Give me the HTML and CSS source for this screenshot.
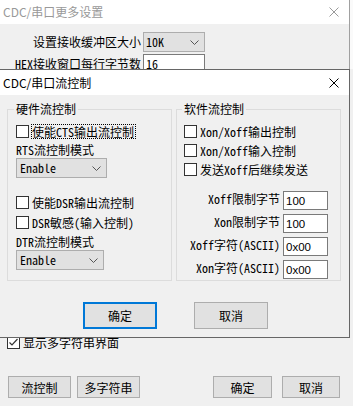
FILE: index.html
```html
<!DOCTYPE html>
<html>
<head>
<meta charset="utf-8">
<link rel="stylesheet" href="styles.css">
</head>
<body>
<div class="screen">
  <div class="bgwin">
    <div class="bg-top">
      <div class="bg-top-main">
        <div class="titlebar">
          <span class="title inactive">CDC/串口更多设置</span>
          <svg class="close" width="10" height="10" viewBox="0 0 10 10"><path d="M0.5 0.5 L9.5 9.5 M9.5 0.5 L0.5 9.5" stroke="#9a9a9a" stroke-width="1"/></svg>
        </div>
        <div class="bg-rows">
          <div class="field-row">
            <span class="lbl">设置接收缓冲区大小</span>
            <div class="combo k"><span>10K</span><svg width="9" height="5" viewBox="0 0 9 5"><polyline points="0.5,0.5 4.5,4.5 8.5,0.5" fill="none" stroke="#555" stroke-width="1"/></svg></div>
          </div>
          <div class="field-row">
            <span class="lbl">HEX接收窗口每行字节数</span>
            <div class="edit wide">16</div>
          </div>
        </div>
      </div>
      <div class="bg-top-rest"></div>
    </div>
    <div class="bg-bottom">
      <div class="chk bg-check">
        <span class="box"><svg width="11" height="11" viewBox="0 0 11 11"><polyline points="1.5,5.5 4,8 9.5,2" fill="none" stroke="#333" stroke-width="1.2"/></svg></span>
        <span>显示多字符串界面</span>
      </div>
      <div class="bg-buttons">
        <div class="btn-pair left">
          <div class="btn w63">流控制</div>
          <div class="btn w63">多字符串</div>
        </div>
        <div class="btn-pair right">
          <div class="btn w59">确定</div>
          <div class="btn w58">取消</div>
        </div>
      </div>
    </div>
  </div>

  <div class="dialog">
    <div class="titlebar dlg-title">
      <span class="title">CDC/串口流控制</span>
      <svg class="close" width="10" height="10" viewBox="0 0 10 10"><path d="M0.5 0.5 L9.5 9.5 M9.5 0.5 L0.5 9.5" stroke="#000" stroke-width="1"/></svg>
    </div>
    <div class="dlg-body">
      <div class="groups">
        <div class="group hw">
          <span class="legend">硬件流控制</span>
          <div class="chk first"><span class="box"></span><span class="focus">使能CTS输出流控制</span></div>
          <div class="cap after-chk">RTS流控制模式</div>
          <div class="combo rts after-cap"><span>Enable</span><svg width="9" height="5" viewBox="0 0 9 5"><polyline points="0.5,0.5 4.5,4.5 8.5,0.5" fill="none" stroke="#555" stroke-width="1"/></svg></div>
          <div class="chk after-combo"><span class="box"></span><span>使能DSR输出流控制</span></div>
          <div class="chk next5"><span class="box"></span><span>DSR敏感(输入控制)</span></div>
          <div class="cap next5">DTR流控制模式</div>
          <div class="combo dtr after-cap"><span>Enable</span><svg width="9" height="5" viewBox="0 0 9 5"><polyline points="0.5,0.5 4.5,4.5 8.5,0.5" fill="none" stroke="#555" stroke-width="1"/></svg></div>
        </div>
        <div class="group sw">
          <span class="legend">软件流控制</span>
          <div class="chk first"><span class="box"></span><span>Xon/Xoff输出控制</span></div>
          <div class="chk next4"><span class="box"></span><span>Xon/Xoff输入控制</span></div>
          <div class="chk next4"><span class="box"></span><span>发送Xoff后继续发送</span></div>
          <div class="frow first-f"><span class="flbl">Xoff限制字节</span><div class="edit small">100</div></div>
          <div class="frow next4"><span class="flbl">Xon限制字节</span><div class="edit small">100</div></div>
          <div class="frow next4"><span class="flbl">Xoff字符(ASCII)</span><div class="edit small">0x00</div></div>
          <div class="frow next4"><span class="flbl">Xon字符(ASCII)</span><div class="edit small">0x00</div></div>
        </div>
      </div>
      <div class="dlg-buttons">
        <div class="btn big default">确定</div>
        <div class="btn big">取消</div>
      </div>
    </div>
  </div>
</div>
</body>
</html>
```

FILE: styles.css
```css
* { box-sizing: border-box; }
html, body { margin: 0; padding: 0; }
body {
  width: 353px;
  height: 406px;
  overflow: hidden;
  background: #f0f0f0;
  font-family: "Noto Sans Mono CJK SC", "Noto Sans CJK SC", monospace;
  font-size: 12px;
  color: #000;
}
.screen {
  position: relative;
  width: 353px;
  height: 406px;
}
.bgwin {
  height: 406px;
  display: flex;
  flex-direction: column;
  background: #f0f0f0;
}
.bg-top {
  display: flex;
  height: 69px;
  background: #fff;
}
.bg-top-main {
  width: 350px;
  border-right: 1px solid #a0a0a0;
  display: flex;
  flex-direction: column;
}
.bg-top-rest { flex: 1; background: #fafafa; }

.titlebar {
  height: 24px;
  flex: none;
  background: #fff;
  display: flex;
  align-items: center;
  justify-content: space-between;
  padding: 0 10px 0 3px;
}
.title {
  font-family: "Noto Sans CJK SC", sans-serif;
  font-size: 12px;
  line-height: 16px;
}
.title.inactive { color: #999; }
.close { display: block; }

.bg-rows {
  flex: 1;
  background: #f0f0f0;
  padding-top: 8px;
  display: flex;
  flex-direction: column;
  gap: 2px;
}
.field-row {
  display: flex;
  align-items: center;
  gap: 2px;
}
.bg-rows .lbl {
  width: 141px;
  text-align: right;
  line-height: 14px;
}
.combo {
  height: 20px;
  border: 1px solid #adadad;
  background: #e1e1e1;
  display: flex;
  align-items: center;
  justify-content: space-between;
  padding: 0 5px 0 3px;
  line-height: 14px;
}
.combo svg { display: block; }
.combo.k { width: 62px; padding-left: 2px; }
.combo.rts { width: 91px; }
.combo.dtr { width: 88px; }

.edit {
  height: 20px;
  border: 1px solid #7a7a7a;
  background: #fff;
  display: flex;
  align-items: center;
  padding-left: 2px;
  line-height: 14px;
}
.edit.wide { width: 62px; }
.edit.small {
  width: 45px;
  height: 19px;
  font-family: "Liberation Sans", sans-serif;
  font-size: 11.5px;
  padding-left: 2px;
}

.bg-bottom {
  margin-top: auto;
  padding: 0 13px 8px 7px;
}
.chk {
  display: flex;
  align-items: center;
  gap: 3px;
  height: 15px;
  line-height: 14px;
  white-space: nowrap;
}
.box {
  width: 13px;
  height: 13px;
  flex: none;
  border: 1px solid #333;
  background: #fff;
  display: flex;
  align-items: center;
  justify-content: center;
}
.box svg { display: block; }
.bg-check { height: 13px; gap: 3px; }
.bg-check span:last-child {
  font-family: "Noto Sans CJK SC", sans-serif;
}
.bg-buttons {
  margin-top: 27px;
  margin-left: 1px;
  display: flex;
  justify-content: space-between;
}
.btn-pair { display: flex; }
.btn-pair.left { gap: 6px; }
.btn-pair.right { gap: 10px; }
.btn {
  height: 22px;
  border: 1px solid #adadad;
  background: #e1e1e1;
  font-family: "Noto Sans CJK SC", sans-serif;
  font-size: 12px;
  display: flex;
  align-items: center;
  justify-content: center;
}
.w63 { width: 63px; }
.w59 { width: 59px; }
.w58 { width: 58px; }

.dialog {
  position: absolute;
  top: 69px;
  left: 0;
  width: 350px;
  height: 269px;
  border: 1px solid #666;
  border-left: none;
  background: #f0f0f0;
  display: flex;
  flex-direction: column;
}
.dlg-title { height: 25px; }
.dlg-body {
  padding: 14px 0 0 7px;
  display: flex;
  flex-direction: column;
}
.groups {
  display: flex;
  gap: 4px;
}
.group {
  width: 165px;
  height: 172px;
  border: 1px solid #dcdcdc;
  display: flex;
  flex-direction: column;
  align-items: flex-start;
}
.group.hw { padding: 0 4px 0 8px; }
.group.sw { padding: 0 12px 0 7px; }
.legend {
  margin-top: -8px;
  margin-left: -2px;
  height: 14px;
  line-height: 14px;
  padding: 0 2px;
  background: #f0f0f0;
}
.chk.first { margin-top: 8px; }
.focus {
  border: 1px dotted #000;
  height: 15px;
  line-height: 13px;
  padding-right: 1px;
  margin-left: -1px;
}
.cap { height: 14px; line-height: 14px; }
.after-chk { margin-top: 4px; }
.after-cap { margin-top: 1px; }
.after-combo { margin-top: 17px; }
.next5 { margin-top: 5px; }
.next4 { margin-top: 4px; }

.frow {
  align-self: stretch;
  display: flex;
  justify-content: flex-end;
  align-items: center;
  gap: 3px;
  height: 19px;
}
.frow.first-f { margin-top: 14px; }
.flbl {
  line-height: 14px;
  padding-bottom: 3px;
  white-space: nowrap;
}

.dlg-buttons {
  margin-top: 21px;
  padding-left: 76px;
  display: flex;
  gap: 37px;
}
.btn.big {
  width: 74px;
  height: 27px;
}
.btn.default {
  border: 2px solid #0078d7;
}
```
